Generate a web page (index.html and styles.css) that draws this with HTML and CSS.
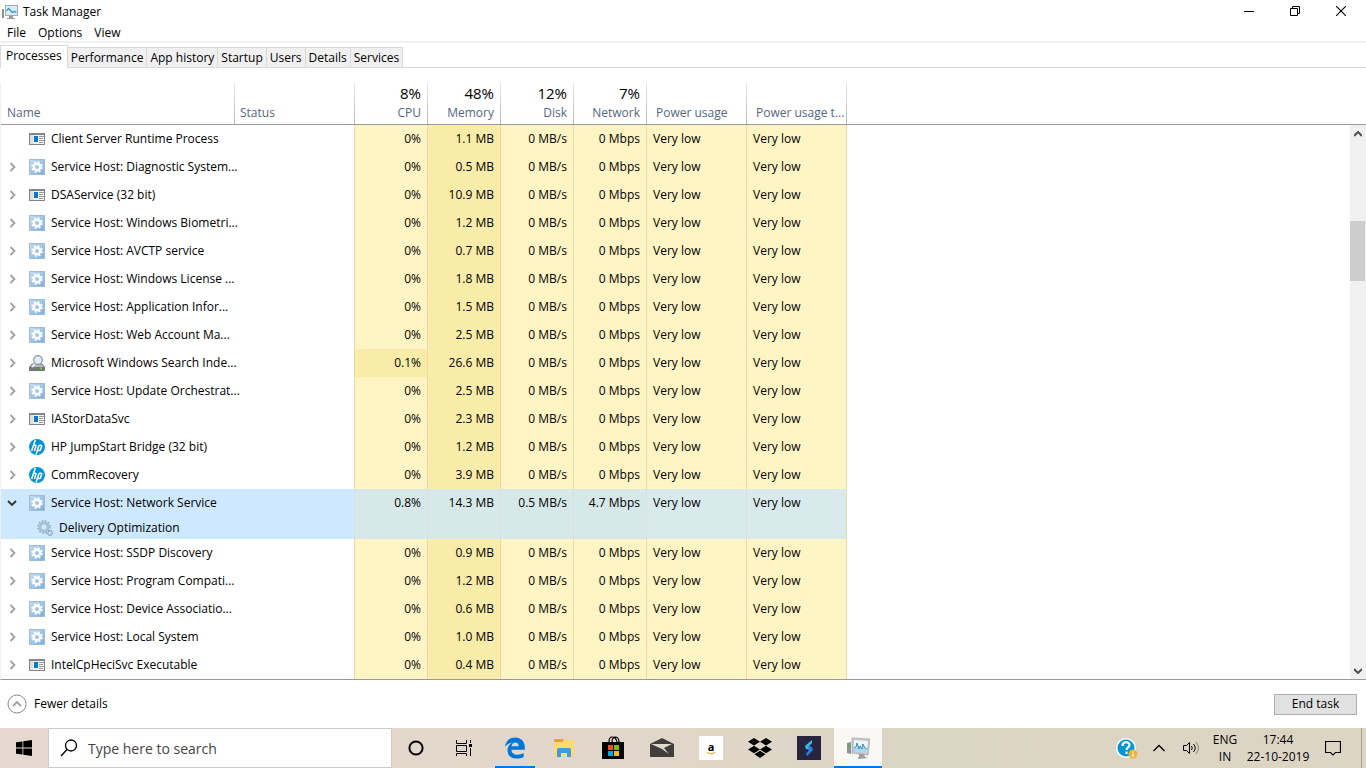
FILE: index.html
```html
<!DOCTYPE html>
<html lang="en">
<head>
    <meta charset="UTF-8">
    <meta name="viewport" content="width=device-width, initial-scale=1.0">
    <title>Task Manager</title>
    <link rel="stylesheet" href="styles.css">
</head>
<body>

    <!-- icons used more than once -->
    <svg class="sprite" aria-hidden="true">
        <defs>
            <linearGradient id="gear-bg" x1="0" y1="0" x2="1" y2="1">
                <stop offset="0" stop-color="#c3dcf0"/>
                <stop offset="1" stop-color="#7badde"/>
            </linearGradient>
        </defs>
        <symbol id="service" viewBox="0 0 16 16">
            <rect x=".5" y=".5" width="15" height="15" fill="url(#gear-bg)" stroke="#a3bdd4"/>
            <circle cx="8" cy="8" r="3.2" fill="none" stroke="#fff" stroke-width="2.400"/>
            <circle cx="8" cy="8" r="4.900" fill="none" stroke="#fff" stroke-width="1.800" stroke-dasharray="2.100 1.750"/>
        </symbol>
        <symbol id="app" viewBox="0 0 16 16">
            <rect x=".5" y="2.5" width="15" height="11" fill="#f4f4f4" stroke="#858585"/>
            <path d="M0 2h16v2H0z" fill="#858585"/>
            <path d="M1 4h3v9H1z" fill="#dedede"/>
            <path d="M5 5h4v6H5z" fill="#0078d7"/>
            <path d="M10 5.5h5M10 7.5h4M10 9.5h5M10 11.5h4" stroke="#999"/>
        </symbol>
        <symbol id="hp" viewBox="0 0 16 16">
            <circle cx="8" cy="8" r="8" fill="#0096d6"/>
            <path d="M6.3 1 2.6 12M4.3 6.3h1.9q1 0 .7 1L5.4 12M10.1 6.2 7 15.5M10.3 6.2h1.5q1.2 0 .8 1.1l-1 3.1q-.3 1-1.3 1H8.8" fill="none" stroke="#fff" stroke-width="1.5"/>
        </symbol>
        <symbol id="arrow" viewBox="0 0 8 10">
            <path d="m1.5 1 4 4-4 4" fill="none" stroke="#a0a0a0" stroke-width="1.8"/>
        </symbol>
        <symbol id="monitor" viewBox="0 0 24 22">
            <path d="M1 6l4-1v12l-4-1z" fill="#8d9292"/>
            <path d="M2 8h2v2H2z" fill="#4db646"/>
            <path d="m13 16 5 1 1 3 3 1-9 1-2-1 2-1z" fill="#9aa0a3"/>
            <path d="m6 1 18 1-2 16-16-2z" fill="#c5c8ca" stroke="#979c9f" stroke-width=".6"/>
            <path d="m8 3 14 1-1.5 11.5L8 14z" fill="#eef7fc"/>
            <path d="m8 11 2-1 1-4 2 6 1-3 2 3 1-5 2 4 2 1-.5 3.5L8 14z" fill="#a5d8f3"/>
            <path d="m8 11 2-1 1-4 2 6 1-3 2 3 1-5 2 4 2 1" fill="none" stroke="#2377a5" stroke-width=".8"/>
        </symbol>
    </svg>

    <main class="window">
        <header class="titlebar">
            <svg class="title-icon" viewBox="0 0 16 14" aria-hidden="true">
                <path d="M0 4h2v9H0z" fill="#8d9292"/>
                <path d="M0 6h1v2H0z" fill="#4db646"/>
                <path d="M7 11h4v2h2v1H5v-1h2z" fill="#9a9a9a"/>
                <rect x="3.5" y=".5" width="12" height="10" fill="#d9edf8" stroke="#a8aaab"/>
                <path d="m4.500 6 2-2.500 2 2 2 2 2-1 2 1" fill="none" stroke="#2496c8" stroke-width="1.200"/>
            </svg>
            <h1>Task Manager</h1>
            <div class="window-buttons">
                <button aria-label="Minimize"><svg width="10" height="10"><path d="M0 5.500h10" stroke="#000"/></svg></button>
                <button aria-label="Restore"><svg width="10" height="10"><path d="M.5 2.500h7v7h-7zM2.500 2.500v-2h7v7h-2" fill="none" stroke="#000"/></svg></button>
                <button aria-label="Close"><svg width="10" height="10"><path d="m0 0 10 10M10 0 0 10" stroke="#000" stroke-width="1.100"/></svg></button>
            </div>
        </header>

        <nav class="menu">
            <button>File</button>
            <button>Options</button>
            <button>View</button>
        </nav>

        <div class="tabs" role="tablist">
            <button class="tab active" role="tab" aria-selected="true">Processes</button>
            <button class="tab" role="tab">Performance</button>
            <button class="tab" role="tab">App history</button>
            <button class="tab" role="tab">Startup</button>
            <button class="tab" role="tab">Users</button>
            <button class="tab" role="tab">Details</button>
            <button class="tab" role="tab">Services</button>
        </div>

        <section class="processes">
            <table>
                <colgroup>
                    <col class="col-name"><col class="col-status">
                    <col class="col-number"><col class="col-number"><col class="col-number"><col class="col-number">
                    <col class="col-power"><col class="col-power"><col>
                </colgroup>
                <thead>
                    <tr>
                        <th>Name</th>
                        <th>Status</th>
                        <th class="num"><b>8%</b>CPU</th>
                        <th class="num"><b>48%</b>Memory</th>
                        <th class="num"><b>12%</b>Disk</th>
                        <th class="num"><b>7%</b>Network</th>
                        <th class="power">Power usage</th>
                        <th class="power">Power usage t...</th>
                        <td></td>
                    </tr>
                </thead>
                <tbody>
                    <tr>
                        <td><div class="name"><span class="toggle"></span><svg class="icon"><use href="#app"/></svg>Client Server Runtime Process</div></td><td></td>
                        <td>0%</td><td>1.1 MB</td><td>0 MB/s</td><td>0 Mbps</td><td>Very low</td><td>Very low</td><td></td>
                    </tr>
                    <tr>
                        <td><div class="name"><button class="toggle" aria-label="Expand"><svg><use href="#arrow"/></svg></button><svg class="icon"><use href="#service"/></svg>Service Host: Diagnostic System...</div></td><td></td>
                        <td>0%</td><td>0.5 MB</td><td>0 MB/s</td><td>0 Mbps</td><td>Very low</td><td>Very low</td><td></td>
                    </tr>
                    <tr>
                        <td><div class="name"><button class="toggle" aria-label="Expand"><svg><use href="#arrow"/></svg></button><svg class="icon"><use href="#app"/></svg>DSAService (32 bit)</div></td><td></td>
                        <td>0%</td><td>10.9 MB</td><td>0 MB/s</td><td>0 Mbps</td><td>Very low</td><td>Very low</td><td></td>
                    </tr>
                    <tr>
                        <td><div class="name"><button class="toggle" aria-label="Expand"><svg><use href="#arrow"/></svg></button><svg class="icon"><use href="#service"/></svg>Service Host: Windows Biometri...</div></td><td></td>
                        <td>0%</td><td>1.2 MB</td><td>0 MB/s</td><td>0 Mbps</td><td>Very low</td><td>Very low</td><td></td>
                    </tr>
                    <tr>
                        <td><div class="name"><button class="toggle" aria-label="Expand"><svg><use href="#arrow"/></svg></button><svg class="icon"><use href="#service"/></svg>Service Host: AVCTP service</div></td><td></td>
                        <td>0%</td><td>0.7 MB</td><td>0 MB/s</td><td>0 Mbps</td><td>Very low</td><td>Very low</td><td></td>
                    </tr>
                    <tr>
                        <td><div class="name"><button class="toggle" aria-label="Expand"><svg><use href="#arrow"/></svg></button><svg class="icon"><use href="#service"/></svg>Service Host: Windows License ...</div></td><td></td>
                        <td>0%</td><td>1.8 MB</td><td>0 MB/s</td><td>0 Mbps</td><td>Very low</td><td>Very low</td><td></td>
                    </tr>
                    <tr>
                        <td><div class="name"><button class="toggle" aria-label="Expand"><svg><use href="#arrow"/></svg></button><svg class="icon"><use href="#service"/></svg>Service Host: Application Infor...</div></td><td></td>
                        <td>0%</td><td>1.5 MB</td><td>0 MB/s</td><td>0 Mbps</td><td>Very low</td><td>Very low</td><td></td>
                    </tr>
                    <tr>
                        <td><div class="name"><button class="toggle" aria-label="Expand"><svg><use href="#arrow"/></svg></button><svg class="icon"><use href="#service"/></svg>Service Host: Web Account Ma...</div></td><td></td>
                        <td>0%</td><td>2.5 MB</td><td>0 MB/s</td><td>0 Mbps</td><td>Very low</td><td>Very low</td><td></td>
                    </tr>
                    <tr>
                        <td><div class="name"><button class="toggle" aria-label="Expand"><svg><use href="#arrow"/></svg></button>
                            <svg class="icon" viewBox="0 0 16 16">
                                <path d="m3 9-2.500 3v3.500h15V12L13 9z" fill="#b9bcbe" stroke="#74787b"/>
                                <path d="M1 12h14v3H1z" fill="#74787b"/>
                                <path d="M11 12.500h2v2h-2z" fill="#6fd62e"/>
                                <path d="m6 9-3 3" stroke="#e8eaec" stroke-width="1.800"/>
                                <circle cx="9" cy="5" r="4.300" fill="#dceefa" stroke="#8b9aa5" stroke-width="1.300"/>
                            </svg>Microsoft Windows Search Inde...</div></td><td></td>
                        <td class="hot">0.1%</td><td>26.6 MB</td><td>0 MB/s</td><td>0 Mbps</td><td>Very low</td><td>Very low</td><td></td>
                    </tr>
                    <tr>
                        <td><div class="name"><button class="toggle" aria-label="Expand"><svg><use href="#arrow"/></svg></button><svg class="icon"><use href="#service"/></svg>Service Host: Update Orchestrat...</div></td><td></td>
                        <td>0%</td><td>2.5 MB</td><td>0 MB/s</td><td>0 Mbps</td><td>Very low</td><td>Very low</td><td></td>
                    </tr>
                    <tr>
                        <td><div class="name"><button class="toggle" aria-label="Expand"><svg><use href="#arrow"/></svg></button><svg class="icon"><use href="#app"/></svg>IAStorDataSvc</div></td><td></td>
                        <td>0%</td><td>2.3 MB</td><td>0 MB/s</td><td>0 Mbps</td><td>Very low</td><td>Very low</td><td></td>
                    </tr>
                    <tr>
                        <td><div class="name"><button class="toggle" aria-label="Expand"><svg><use href="#arrow"/></svg></button><svg class="icon"><use href="#hp"/></svg>HP JumpStart Bridge (32 bit)</div></td><td></td>
                        <td>0%</td><td>1.2 MB</td><td>0 MB/s</td><td>0 Mbps</td><td>Very low</td><td>Very low</td><td></td>
                    </tr>
                    <tr>
                        <td><div class="name"><button class="toggle" aria-label="Expand"><svg><use href="#arrow"/></svg></button><svg class="icon"><use href="#hp"/></svg>CommRecovery</div></td><td></td>
                        <td>0%</td><td>3.9 MB</td><td>0 MB/s</td><td>0 Mbps</td><td>Very low</td><td>Very low</td><td></td>
                    </tr>
                    <tr class="selected">
                        <td><div class="name"><button class="toggle" aria-label="Collapse"><svg viewBox="0 0 10 10"><path d="m1 3 4 4 4-4" fill="none" stroke="#333" stroke-width="1.800"/></svg></button><svg class="icon"><use href="#service"/></svg>Service Host: Network Service</div></td><td></td>
                        <td>0.8%</td><td>14.3 MB</td><td>0.5 MB/s</td><td>4.7 Mbps</td><td>Very low</td><td>Very low</td><td></td>
                    </tr>
                    <tr class="selected child">
                        <td><div class="name">
                            <svg class="icon" viewBox="0 0 16 16">
                                <circle cx="7" cy="7" r="4.500" fill="none" stroke="#a9bdcb" stroke-width="2"/>
                                <circle cx="7" cy="7" r="6.200" fill="none" stroke="#93a9b8" stroke-width="1.500" stroke-dasharray="1.600 1.650"/>
                                <circle cx="7" cy="7" r="3.200" fill="none" stroke="#7fa3bd" stroke-width=".6"/>
                                <circle cx="13" cy="13" r="2.200" fill="none" stroke="#8299aa" stroke-width="1.500" stroke-dasharray="1.200 .5"/>
                            </svg>Delivery Optimization</div></td><td></td>
                        <td></td><td></td><td></td><td></td><td></td><td></td><td></td>
                    </tr>
                    <tr>
                        <td><div class="name"><button class="toggle" aria-label="Expand"><svg><use href="#arrow"/></svg></button><svg class="icon"><use href="#service"/></svg>Service Host: SSDP Discovery</div></td><td></td>
                        <td>0%</td><td>0.9 MB</td><td>0 MB/s</td><td>0 Mbps</td><td>Very low</td><td>Very low</td><td></td>
                    </tr>
                    <tr>
                        <td><div class="name"><button class="toggle" aria-label="Expand"><svg><use href="#arrow"/></svg></button><svg class="icon"><use href="#service"/></svg>Service Host: Program Compati...</div></td><td></td>
                        <td>0%</td><td>1.2 MB</td><td>0 MB/s</td><td>0 Mbps</td><td>Very low</td><td>Very low</td><td></td>
                    </tr>
                    <tr>
                        <td><div class="name"><button class="toggle" aria-label="Expand"><svg><use href="#arrow"/></svg></button><svg class="icon"><use href="#service"/></svg>Service Host: Device Associatio...</div></td><td></td>
                        <td>0%</td><td>0.6 MB</td><td>0 MB/s</td><td>0 Mbps</td><td>Very low</td><td>Very low</td><td></td>
                    </tr>
                    <tr>
                        <td><div class="name"><button class="toggle" aria-label="Expand"><svg><use href="#arrow"/></svg></button><svg class="icon"><use href="#service"/></svg>Service Host: Local System</div></td><td></td>
                        <td>0%</td><td>1.0 MB</td><td>0 MB/s</td><td>0 Mbps</td><td>Very low</td><td>Very low</td><td></td>
                    </tr>
                    <tr>
                        <td><div class="name"><button class="toggle" aria-label="Expand"><svg><use href="#arrow"/></svg></button><svg class="icon"><use href="#app"/></svg>IntelCpHeciSvc Executable</div></td><td></td>
                        <td>0%</td><td>0.4 MB</td><td>0 MB/s</td><td>0 Mbps</td><td>Very low</td><td>Very low</td><td></td>
                    </tr>
                </tbody>
            </table>
            <div class="scroll-side">
                <div class="scrollbar">
                    <button aria-label="Scroll up"><svg width="8" height="6"><path d="m0 5 4-4 4 4" fill="none" stroke="#505050" stroke-width="2"/></svg></button>
                    <div class="track"><div class="thumb"></div></div>
                    <button aria-label="Scroll down"><svg width="8" height="6"><path d="m0 1 4 4 4-4" fill="none" stroke="#505050" stroke-width="2"/></svg></button>
                </div>
            </div>
        </section>

        <footer class="bottom">
            <button class="fewer">
                <svg width="20" height="20" viewBox="0 0 20 20" aria-hidden="true"><circle cx="10" cy="10" r="9" fill="none" stroke="#8a8a8a"/><path d="m6 12 4-4 4 4" fill="none" stroke="#a0a0a0" stroke-width="1.800"/></svg>
                Fewer details
            </button>
            <button class="end-task">End task</button>
        </footer>
    </main>

    <div class="taskbar">
        <button class="task" aria-label="Start">
            <svg width="16" height="16" viewBox="0 0 16 16"><path d="M0 2.300 6.500 1.400v6.200H0zM7.300 1.300 16 0v7.600H7.300zM0 8.400h6.500v6.200L0 13.700zM7.300 8.400H16V16l-8.700-1.300z"/></svg>
        </button>
        <label class="searchbox">
            <svg width="18" height="18" viewBox="0 0 18 18" aria-hidden="true"><circle cx="11" cy="6.500" r="5.500" fill="none" stroke="#000" stroke-width="1.300"/><path d="M7 10.500 1 17" stroke="#000" stroke-width="1.300"/></svg>
            <input type="text" placeholder="Type here to search" aria-label="Search">
        </label>
        <button class="task" aria-label="Cortana">
            <svg width="16" height="16"><circle cx="8" cy="8" r="6.600" fill="none" stroke="#000" stroke-width="2"/></svg>
        </button>
        <button class="task" aria-label="Task View">
            <svg width="16" height="16"><path d="M.5 0v3.500h10V0M.5 16v-2.500h10V16M.5 5.500h10v6H.5zM14.500 0v3M14.500 8v8" fill="none" stroke="#000"/><path d="M13 4h3v3h-3z"/></svg>
        </button>
        <div class="pinned">
            <button class="task open" aria-label="Microsoft Edge">
                <svg width="22" height="22" viewBox="0 0 22 22"><path d="M1 9.800C1.600 4 5.600.5 11 .5c6.200 0 9.800 4.300 9.800 9.800v2.400H7.400c.2 3.500 2.800 5 6.100 5 2.400 0 4.400-.6 6.200-1.700V20c-2 1.200-4.400 1.600-7.100 1.600-5.600 0-9.100-3.400-9.100-8.400 0-3.200 1.600-5.900 4.500-7.500C4.900 6.200 2.600 7.500 1 9.800zm6.500-.6h7.200c0-2.300-1.100-3.800-3.400-3.800-2 0-3.400 1.500-3.800 3.800z" fill="#0078d7"/></svg>
            </button>
            <button class="task" aria-label="File Explorer">
                <svg width="22" height="20" viewBox="0 0 22 20"><path d="M1 1h9l1 1h10v16H1z" fill="#ffda70"/><path d="M1 1h9l1 1-2 2H1z" fill="#e5a61b"/><path d="M4 19v-7q0-2 2-2h10q2 0 2 2v7h-4v-4H8v4z" fill="#4299dc"/></svg>
            </button>
            <button class="task" aria-label="Microsoft Store">
                <svg width="24" height="24" viewBox="0 0 24 24"><path d="M1 6h22v17H1z"/><path d="M8 6q0-5 3-5 4 0 5 5M11 6q0-4 3-5 4 0 4 5" fill="none" stroke="#000" stroke-width="1.200"/><path d="M7 9h5v5H7z" fill="#f25022"/><path d="M13 9h5v5h-5z" fill="#7fba00"/><path d="M7 15h5v5H7z" fill="#00a4ef"/><path d="M13 15h5v5h-5z" fill="#ffb900"/></svg>
            </button>
            <button class="task" aria-label="Mail">
                <svg width="24" height="20" viewBox="0 0 24 20"><path d="M0 6 12 0l12 6v13H0z" fill="#403d3a"/><path d="m1 6 21 0-8 4 5 6-7-5z" fill="#e1d8cc"/></svg>
            </button>
            <button class="task" aria-label="Amazon">
                <span class="amazon">a<svg width="8" height="3"><path d="M0 0q4 4 8 0" fill="none" stroke="#f90"/></svg></span>
            </button>
            <button class="task" aria-label="Dropbox">
                <svg width="24" height="20" viewBox="0 0 24 20"><path d="m6 0 6 3.800-6 3.800-6-3.800zM18 0l6 3.800-6 3.800-6-3.800zM6 7.700l6 3.800-6 3.800-6-3.800zM18 7.700l6 3.800-6 3.800-6-3.800zM12 12.700l5.500 3.500L12 20l-5.500-3.800z"/></svg>
            </button>
            <button class="task" aria-label="Streaming">
                <svg width="24" height="24" viewBox="0 0 24 24"><path d="M0 0h24v24H0z" fill="#27243d"/><path d="m15 4-7 6 1 3 5 1 1-2-3-2 3-3z" fill="#31c3f2"/><path d="m10 20 6-6-1-3-5-1 2 3-1 3-2 1z" fill="#3180df"/></svg>
            </button>
            <button class="task open current" aria-label="Task Manager">
                <svg width="24" height="22"><use href="#monitor"/></svg>
            </button>
        </div>

        <div class="tray">
            <button aria-label="Help">
                <svg width="22" height="22" viewBox="0 0 22 22"><circle cx="10" cy="11" r="10" fill="#fff"/><circle cx="10" cy="11" r="8.500" fill="#0096d6"/><path d="M6.500 9c0-5 7-5 7-1 0 2.500-3 2.300-3 5M10.500 14.500v2.500" fill="none" stroke="#fff" stroke-width="2.200"/><circle cx="17" cy="17" r="4.500" fill="#f5b335"/><path d="M17 14.500v1M17 16.500v3.500" stroke="#fff" stroke-width="1.300"/></svg>
            </button>
            <button aria-label="Show hidden icons">
                <svg width="12" height="8"><path d="m.5 7 5.500-5.500L11.500 7" fill="none" stroke="#000" stroke-width="1.300"/></svg>
            </button>
            <button aria-label="Volume">
                <svg width="17" height="14"><path d="M.5 4.500h3l3-3v11l-3-3h-3z" fill="none" stroke="#000"/><path d="M8.500 5q1.500 2 0 4M10.500 3q3.500 4 0 8" fill="none" stroke="#000"/><path d="M13 1q5 6 0 12" fill="none" stroke="#88847c"/></svg>
            </button>
            <button class="language">ENG<br>IN</button>
            <button class="clock">17:44<br>22-10-2019</button>
            <button class="notifications" aria-label="Notifications">
                <svg width="16" height="16"><path d="M.5 1.500h15v11h-5l-2.500 2.500-2.500-2.500h-5z" fill="none" stroke="#000" stroke-width="1.200"/></svg>
            </button>
            <button class="desktop" aria-label="Show desktop"></button>
        </div>
    </div>

</body>
</html>
```

FILE: styles.css
```css
*{
    margin: 0;padding:0;
    box-sizing: border-box;
}

body{
    display:flex;
    flex-direction: column;
    min-height: 100vh;
    font: 12px/16px "Open Sans", "Noto Sans", sans-serif;
    color: #000;background:#fff;
}

button{
    font: inherit;
    color: inherit;
    background: none;
    border: none;
}

svg{
    display: block;
    flex-shrink: 0;
}

.sprite{
    position: absolute;
    width: 0;height: 0;
}

.window{
    flex: 1;
    display:flex;
    flex-direction: column;
}

/* title and menu */

.titlebar{
    display:flex;
    align-items:center;
    height: 24px;
    padding-left: 2px;
    gap: 5px;
}

.title-icon{
    width: 16px;height: 14px;
}

.titlebar h1{
    font-size: 12px;
    font-weight: normal;
}

.window-buttons{
    display:flex;
    align-self: flex-start;
    margin-left: auto;
    padding-right: 2px;
}

.window-buttons button{
    display:flex;
    justify-content:center;
    align-items:center;
    width: 46px;height: 21px;
}

.menu{
    display:flex;
    gap: 12px;
    height: 19px;
    padding-left: 7px;
    border-bottom: 2px solid #f0f0f0;
}

/* tabs */

.tabs{
    display:flex;
    align-items: flex-end;
    height: 25px;
    border-bottom: 1px solid #d9d9d9;
}

.tab{
    height: 20px;
    padding: 0 3px;
    background: #f0f0f0;
    border: 1px solid #d9d9d9;
    border-left: none;
    border-bottom: none;
}

.tab.active{
    height: 23px;
    padding: 0 5px 3px;
    margin-bottom: -1px;
    background: #fff;
    border-left: 1px solid #d9d9d9;
}

/* process table */

.processes{
    display:flex;
    margin-top: 15px;
    border-left: 1px solid #f0f0f0;
    border-bottom: 1px solid #999;
}

table{
    flex: 1;
    width: 100%;
    min-width: 0;
    table-layout: fixed;
    border-spacing: 0;
}

.col-name{
    width: 233px;
}

.col-status{
    width: 120px;
}

.col-number{
    width: 73px;
}

.col-power{
    width: 100px;
}

thead tr > *{
    height: 42px;
    padding: 0 6px 3px;
    color: #56677f;
    font-weight: normal;
    text-align: left;
    vertical-align: bottom;
    white-space: nowrap;
    border-bottom: 1px solid #999;
    background: linear-gradient(#e8e8e8, #b8b8b8) left / 1px 100% no-repeat;
}

thead th:first-child{
    background: none;
}

thead .num{
    text-align: right;
}

thead .power{
    padding-left: 10px;
}

thead b{
    display: block;
    font-size: 15px;
    line-height: 20px;
    padding-bottom: 2px;
    font-weight: normal;
    color: #000;
}

tbody td{
    height: 28px;
    padding: 0 6px;
    white-space: nowrap;
}

tbody td:first-child{
    padding: 0;
}

tbody td:nth-child(n+3){
    text-align: right;
    background: #fff4c4;
    border-left: 1px solid #edd9a3;
}

tbody td:nth-child(4){
    background: #f9eca8;
}

tbody td.hot{
    background: #f9eca8;
}

tbody td:nth-child(n+7){
    text-align: left;
}

tbody td:last-child{
    background: none;
}

.name{
    display:flex;
    align-items:center;
}

.toggle{
    flex-shrink: 0;
    width: 28px;
    padding-left: 8px;
}

.toggle svg{
    width: 8px;height: 10px;
}

.icon{
    width: 16px;height: 16px;
    margin-right: 6px;
}

.selected td{
    background: #cde8ff;
}

.selected td:nth-child(n+3):not(:last-child){
    background: #d8eaec;
    border-left-color: #d9dfe3;
}

.selected td:nth-child(n+3):nth-child(-n+6){
    background: #d6e8e8;
}

.selected .toggle{
    padding-left: 6px;
}

.selected .toggle svg{
    width: 10px;
}

.child td{
    height: 22px;
}

.child .name{
    padding-left: 36px;
}

/* scrollbar */

.scroll-side{
    display:flex;
    flex-shrink: 0;
    width: 16px;
    padding-top: 41px;
}

.scrollbar{
    flex: 1;
    display:flex;
    flex-direction: column;
    background: #f0f0f0;
    border-top: 1px solid #999;
}

.scrollbar button{
    display:flex;
    justify-content:center;
    align-items:center;
    height: 17px;
}

.track{
    flex: 1;
    padding-top: 79px;
}

.thumb{
    height: 60px;
    margin-right: 1px;
    background: #cdcdcd;
}

/* bottom row */

.bottom{
    flex: 1;
    display:flex;
    justify-content: space-between;
    align-items:center;
    min-height: 48px;
    padding: 0 9px 0 7px;
}

.fewer{
    display:flex;
    align-items:center;
    gap: 7px;
}

.end-task{
    width: 83px;height: 21px;
    background: #e1e1e1;
    border: 1px solid #adadad;
}

/* taskbar */

.taskbar{
    display:flex;
    height: 40px;
    background: linear-gradient(90deg, #e6d8ce, #e3d7cb 40%, #dbd5c5 65%, #ddd5c3);
}

.task{
    display:flex;
    justify-content:center;
    align-items:center;
    width: 48px;
}

.searchbox{
    display:flex;
    align-items:center;
    gap: 10px;
    width: 344px;
    padding-left: 11px;
    background: #fff;
    border: 1px solid #ccc;
}

.searchbox input{
    flex: 1;
    min-width: 0;
    font: 14px "Open Sans", "Noto Sans", sans-serif;
    border: none;
    outline: none;
}

.searchbox input::placeholder{
    color: #444;
}

.pinned{
    display:flex;
    gap: 1px;
    margin-left: 3px;
}

.open{
    background: linear-gradient(#0078d7, #0078d7) bottom / 40px 2px no-repeat;
}

.current{
    background-color: #faf8f5;
    background-size: 100% 2px;
}

.amazon{
    display:flex;
    flex-direction: column;
    justify-content:center;
    align-items:center;
    width: 24px;height: 24px;
    font-size: 11px;
    line-height: 11px;
    font-weight: bold;
    background: #fff;
}

.tray{
    display:flex;
    margin-left: auto;
}

.tray button{
    display:flex;
    justify-content:center;
    align-items:center;
    width: 32px;
}

.tray .language,
.tray .clock{
    display: block;
    width: 36px;
    line-height: 17px;
    text-align: center;
}

.tray .clock{
    width: 70px;
}

.tray .notifications{
    width: 48px;
    padding-right: 8px;
}

.tray .desktop{
    width: 5px;
    border-left: 1px solid #aaa497;
}
```
